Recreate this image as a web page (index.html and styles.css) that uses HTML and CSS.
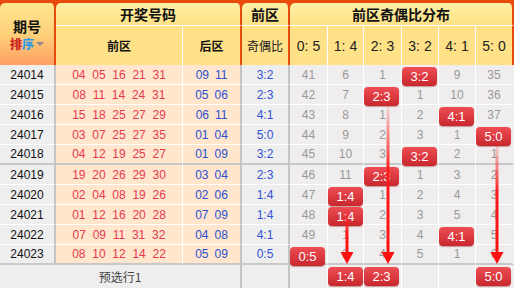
FILE: index.html
```html
<!DOCTYPE html>
<html lang="zh-CN">
<head>
<meta charset="utf-8">
<title>前区奇偶比分布</title>
<link rel="stylesheet" href="styles.css">
</head>
<body>
<div class="chart">
  <div class="grid">
    <div class="c th th1 th-per">
      <span class="per-t">期号</span>
      <span class="sort"><b class="s1">排</b><b class="s2">序</b><i class="tri"></i></span>
    </div>
    <div class="c th th1 span2 ob">开奖号码</div>
    <div class="c th th1 ob">前区</div>
    <div class="c th th1 span6 ob">前区奇偶比分布</div>

    <div class="c th th2">前区</div>
    <div class="c th th2 ob">后区</div>
    <div class="c th th2 ob reg">奇偶比</div>
    <div class="c th th2 lab">0: 5</div>
    <div class="c th th2 lab">1: 4</div>
    <div class="c th th2 lab">2: 3</div>
    <div class="c th th2 lab">3: 2</div>
    <div class="c th th2 lab">4: 1</div>
    <div class="c th th2 lab ob">5: 0</div>

    <div class="row">
      <div class="c p">24014</div><div class="c f">04 05 16 21 31</div><div class="c k">09 11</div><div class="c r">3:2</div>
      <div class="c d">41</div><div class="c d">6</div><div class="c d">1</div><div class="c d"><span class="b">3:2</span></div><div class="c d">9</div><div class="c d last">35</div>
    </div>
    <div class="row">
      <div class="c p">24015</div><div class="c f">08 11 14 24 31</div><div class="c k">05 06</div><div class="c r">2:3</div>
      <div class="c d">42</div><div class="c d">7</div><div class="c d"><span class="b">2:3</span></div><div class="c d">1</div><div class="c d">10</div><div class="c d last">36</div>
    </div>
    <div class="row">
      <div class="c p">24016</div><div class="c f">15 18 25 27 29</div><div class="c k">06 11</div><div class="c r">4:1</div>
      <div class="c d">43</div><div class="c d">8</div><div class="c d">1</div><div class="c d">2</div><div class="c d"><span class="b">4:1</span></div><div class="c d last">37</div>
    </div>
    <div class="row">
      <div class="c p">24017</div><div class="c f">03 07 25 27 35</div><div class="c k">01 04</div><div class="c r">5:0</div>
      <div class="c d">44</div><div class="c d">9</div><div class="c d">2</div><div class="c d">3</div><div class="c d">1</div><div class="c d last"><span class="b">5:0</span></div>
    </div>
    <div class="row end">
      <div class="c p">24018</div><div class="c f">04 12 19 25 27</div><div class="c k">01 09</div><div class="c r">3:2</div>
      <div class="c d">45</div><div class="c d">10</div><div class="c d">3</div><div class="c d"><span class="b">3:2</span></div><div class="c d">2</div><div class="c d last">1</div>
    </div>
    <div class="row">
      <div class="c p">24019</div><div class="c f">19 20 26 29 30</div><div class="c k">03 04</div><div class="c r">2:3</div>
      <div class="c d">46</div><div class="c d">11</div><div class="c d"><span class="b">2:3</span></div><div class="c d">1</div><div class="c d">3</div><div class="c d last">2</div>
    </div>
    <div class="row">
      <div class="c p">24020</div><div class="c f">02 04 08 19 26</div><div class="c k">02 06</div><div class="c r">1:4</div>
      <div class="c d">47</div><div class="c d"><span class="b">1:4</span></div><div class="c d">1</div><div class="c d">2</div><div class="c d">4</div><div class="c d last">3</div>
    </div>
    <div class="row">
      <div class="c p">24021</div><div class="c f">01 12 16 20 28</div><div class="c k">07 09</div><div class="c r">1:4</div>
      <div class="c d">48</div><div class="c d"><span class="b">1:4</span></div><div class="c d">2</div><div class="c d">3</div><div class="c d">5</div><div class="c d last">4</div>
    </div>
    <div class="row">
      <div class="c p">24022</div><div class="c f">07 09 11 31 32</div><div class="c k">04 08</div><div class="c r">4:1</div>
      <div class="c d">49</div><div class="c d">1</div><div class="c d">3</div><div class="c d">4</div><div class="c d"><span class="b">4:1</span></div><div class="c d last">5</div>
    </div>
    <div class="row end">
      <div class="c p">24023</div><div class="c f">08 10 12 14 22</div><div class="c k">05 09</div><div class="c r">0:5</div>
      <div class="c d"><span class="b">0:5</span></div><div class="c d">2</div><div class="c d">4</div><div class="c d">5</div><div class="c d">1</div><div class="c d last">6</div>
    </div>
    <div class="row foot">
      <div class="c pre span3">预选行1</div><div class="c r"></div>
      <div class="c d"></div><div class="c d"><span class="b">1:4</span></div><div class="c d"><span class="b">2:3</span></div><div class="c d"></div><div class="c d"></div><div class="c d last"><span class="b">5:0</span></div>
    </div>
  </div>

  <svg class="arrows" width="514" height="288" viewBox="0 0 514 288">
    <defs>
      <linearGradient id="gl" x1="0" y1="0" x2="0" y2="1">
        <stop offset="0" stop-color="#ff2020" stop-opacity="0.08"/>
        <stop offset="0.45" stop-color="#ff1a1a" stop-opacity="1"/>
        <stop offset="1" stop-color="#ff1010" stop-opacity="1"/>
      </linearGradient>
      <linearGradient id="gs" x1="0" y1="0" x2="0" y2="1">
        <stop offset="0" stop-color="#ff2020" stop-opacity="0.3"/>
        <stop offset="0.5" stop-color="#ff1a1a" stop-opacity="1"/>
        <stop offset="1" stop-color="#ff1010" stop-opacity="1"/>
      </linearGradient>
    </defs>
    <rect x="386.5" y="104" width="3" height="150" fill="url(#gl)"/>
    <polygon points="381.5,252 394.5,252 388,264" fill="#ff1010"/>
    <rect x="495.5" y="143" width="3" height="111" fill="url(#gl)"/>
    <polygon points="490.5,252 503.5,252 497,264" fill="#ff1010"/>
    <rect x="345.5" y="210" width="3" height="44" fill="url(#gs)"/>
    <polygon points="340.5,252 353.5,252 347,264" fill="#ff1010"/>
  </svg>
</div>
</body>
</html>
```

FILE: styles.css
```css
* {
  box-sizing: border-box;
  margin: 0;
  padding: 0;
}

body {
  margin: 0;
  background: #ffffff;
  font-family: "Liberation Sans", "Noto Sans CJK SC", sans-serif;
}

.chart {
  position: relative;
  width: 514px;
  height: 288px;
  overflow: hidden;
}

.grid {
  display: grid;
  grid-template-columns: 56px 127px 59px 48px 38px 36px 38px 37px 37px 38px;
  grid-template-rows: 23px 39px repeat(10, 20px) 23px;
  padding-top: 3px;
  width: 514px;
  height: 288px;
  background: #e8490d;
}

.row {
  display: contents;
}

.c {
  position: relative;
  display: flex;
  align-items: center;
  justify-content: center;
  border-right: 1px solid #ffffff;
  border-bottom: 1px solid #ffffff;
  font-size: 12px;
  white-space: nowrap;
}

/* header */
.th {
  background: linear-gradient(#fff0a4, #ffe186);
  color: #111111;
  font-family: "Noto Sans CJK SC", "Liberation Sans", sans-serif;
  font-weight: bold;
}

.th1 {
  border-radius: 5px 5px 0 0;
  font-size: 14px;
  line-height: 1;
}

.th2 {
  background: #ffe188;
  border-bottom: none;
  font-size: 12px;
}

.ob {
  border-right: 2px solid #e8490d;
}

.th-per {
  grid-row: span 2;
  flex-direction: column;
  border-right: 2px solid #e8490d;
  border-bottom: none;
  background: linear-gradient(#ffe88f 0%, #ffd07a 50%, #ffa062 100%);
  padding-top: 1px;
}

.per-t {
  font-size: 14px;
  line-height: 18px;
}

.sort {
  display: flex;
  align-items: center;
  font-size: 12px;
  line-height: 18px;
}

.s1 {
  color: #cc2424;
}

.s2 {
  color: #2b9ae6;
}

.tri {
  display: inline-block;
  width: 0;
  height: 0;
  margin-left: 2px;
  margin-top: 1px;
  border-left: 4px solid transparent;
  border-right: 4px solid transparent;
  border-top: 4px solid #8a8a8a;
}

.reg {
  font-weight: normal;
  color: #222222;
}

.lab {
  font-family: "Liberation Sans", sans-serif;
  font-weight: normal;
  font-size: 14px;
  color: #222222;
}

.span2 {
  grid-column: span 2;
}

.span3 {
  grid-column: span 3;
}

.span6 {
  grid-column: span 6;
}

/* body */
.p {
  background: #eeeeee;
  color: #111111;
  border-right: 2px solid #c4c4c4;
}

.f {
  background: #ffe6cc;
  color: #e63a50;
  word-spacing: 3.4px;
}

.k {
  background: #ffe6cc;
  color: #2a50d2;
  word-spacing: 2.6px;
  border-right: 2px solid #c4c4c4;
}

.r {
  background: #eeeeee;
  color: #3352d6;
  border-right: 2px solid #c4c4c4;
}

.d {
  background: #efeded;
  color: #999999;
}

.d.last {
  border-right: 2px solid #efeded;
}

.end > .c {
  border-bottom: 2px solid #c8c8c8;
}

.foot > .c {
  border-bottom: none;
}

.pre {
  background: #eeeeee;
  color: #444444;
  font-family: "Noto Sans CJK SC", "Liberation Sans", sans-serif;
  border-right: 2px solid #c4c4c4;
}

.b {
  position: absolute;
  left: 0;
  top: 2px;
  width: 35px;
  height: 19px;
  border-radius: 4px;
  background: linear-gradient(#ef4d54, #c8272e);
  box-shadow: 0 1px 1px rgba(120, 0, 0, 0.35);
  color: #ffffff;
  font-size: 13px;
  line-height: 19px;
  text-align: center;
  z-index: 1;
}

.arrows {
  position: absolute;
  left: 0;
  top: 0;
  z-index: 2;
  pointer-events: none;
}
```
